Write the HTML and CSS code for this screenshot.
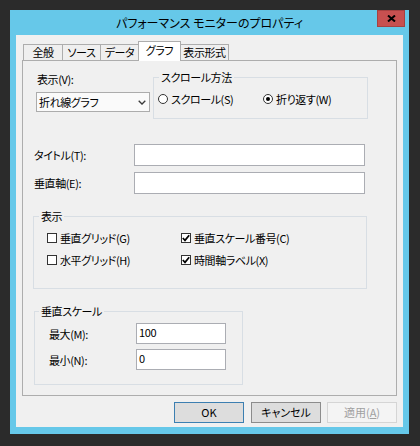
FILE: index.html
```html
<!DOCTYPE html>
<html lang="ja">
<head>
<meta charset="utf-8">
<title>パフォーマンス モニターのプロパティ</title>
<link rel="stylesheet" href="styles.css">
</head>
<body>
<div class="window">
  <div class="titlebar">
    <span class="spacer"></span>
    <div class="title">パフォーマンス モニターのプロパティ</div>
    <div class="close"><svg width="9" height="7" viewBox="0 0 9 7"><path d="M1 0.5 L8 6.5 M8 0.5 L1 6.5" stroke="#000" stroke-width="2" fill="none"/></svg></div>
  </div>
  <div class="client">
    <div class="tabs">
      <div class="tab t1">全般</div>
      <div class="tab t2">ソース</div>
      <div class="tab t3">データ</div>
      <div class="tab t4 active">グラフ</div>
      <div class="tab t5">表示形式</div>
    </div>
    <div class="panel">
      <div class="row-a">
        <div class="view-col">
          <div class="lbl">表示(V):</div>
          <div class="select"><span>折れ線グラフ</span><svg width="8" height="5" viewBox="0 0 8 5"><polyline points="0.7,0.8 4,4 7.3,0.8" stroke="#3a3a3a" stroke-width="1.3" fill="none"/></svg></div>
        </div>
        <fieldset class="grp grp-scroll">
          <legend>スクロール方法</legend>
          <div class="radios">
            <div class="opt"><span class="rb"></span><span>スクロール(S)</span></div>
            <div class="opt"><span class="rb on"></span><span>折り返す(W)</span></div>
          </div>
        </fieldset>
      </div>
      <div class="fields">
        <div class="lbl">タイトル(T):</div><div class="edit"></div>
        <div class="lbl">垂直軸(E):</div><div class="edit"></div>
      </div>
      <fieldset class="grp grp-disp">
        <legend>表示</legend>
        <div class="checks">
          <div class="opt"><span class="cb"></span><span>垂直グリッド(G)</span></div>
          <div class="opt"><span class="cb on"><svg width="8" height="8" viewBox="0 0 8 8"><path d="M0.8 4 L3 6.4 L7.2 1.2" stroke="#000" stroke-width="1.7" fill="none"/></svg></span><span>垂直スケール番号(C)</span></div>
          <div class="opt"><span class="cb"></span><span>水平グリッド(H)</span></div>
          <div class="opt"><span class="cb on"><svg width="8" height="8" viewBox="0 0 8 8"><path d="M0.8 4 L3 6.4 L7.2 1.2" stroke="#000" stroke-width="1.7" fill="none"/></svg></span><span>時間軸ラベル(X)</span></div>
        </div>
      </fieldset>
      <fieldset class="grp grp-scale">
        <legend>垂直スケール</legend>
        <div class="scale">
          <div class="lbl">最大(M):</div><div class="edit val">100</div>
          <div class="lbl">最小(N):</div><div class="edit val">0</div>
        </div>
      </fieldset>
    </div>
    <div class="buttons">
      <div class="btn default">OK</div>
      <div class="btn cancel">キャンセル</div>
      <div class="btn disabled">適用(<u>A</u>)</div>
    </div>
  </div>
</div>
</body>
</html>
```

FILE: styles.css
```css
html, body {
  margin: 0;
  padding: 0;
}

body {
  width: 420px;
  height: 446px;
  box-sizing: border-box;
  padding: 10px 0 0 10px;
  background: #2b2b2b;
  font-family: "Noto Sans CJK JP", "Noto Sans", sans-serif;
  font-size: 11px;
  font-weight: 400;
  line-height: 14px;
  letter-spacing: -0.4px;
  color: #000;
  font-feature-settings: "palt";
}

.window {
  width: 399px;
  height: 424px;
  background: #66c8e9;
  display: flex;
  flex-direction: column;
}

.titlebar {
  height: 25px;
  display: grid;
  grid-template-columns: 1fr auto 1fr;
  align-items: start;
}

.title {
  font-size: 12px;
  line-height: 26px;
  letter-spacing: 0;
  white-space: nowrap;
}

.close {
  justify-self: end;
  margin-right: 4px;
  width: 28px;
  height: 17px;
  box-sizing: border-box;
  background: #c75050;
  border: 1px solid #a64141;
  display: flex;
  align-items: center;
  justify-content: center;
}

.client {
  margin: 0 6px;
  height: 392px;
  box-sizing: border-box;
  padding: 6px 6px 0;
  background: #f0f0f0;
}

.tabs {
  display: flex;
  align-items: flex-end;
  height: 19px;
  padding-left: 1px;
  position: relative;
  z-index: 1;
}

.tab {
  height: 16px;
  box-sizing: border-box;
  border: 1px solid #adadad;
  border-bottom: none;
  background: #efefef;
  text-align: center;
  line-height: 14px;
  margin-left: -1px;
  white-space: nowrap;
}

.tab:first-child { margin-left: 0; }
.t1 { width: 40px; }
.t2 { width: 39px; }
.t3 { width: 39px; }
.t4 { width: 43px; }
.t5 { width: 49px; }

.tab.active {
  height: 20px;
  margin-bottom: -1px;
  padding-top: 1px;
  background: #fff;
}

.panel {
  height: 336px;
  box-sizing: border-box;
  border: 1px solid #adadad;
  padding-top: 9px;
  display: flex;
  flex-direction: column;
  align-items: flex-start;
}

.row-a {
  display: flex;
  align-items: flex-start;
}

.view-col {
  margin-left: 13px;
  width: 114px;
}

.view-col .lbl {
  margin-top: 1px;
  line-height: 16px;
  padding-left: 1px;
}

.select {
  margin-top: 5px;
  height: 20px;
  box-sizing: border-box;
  border: 1px solid #acacac;
  background: #fafafa;
  display: flex;
  align-items: center;
  justify-content: space-between;
  padding: 0 3px 0 2px;
}

.grp {
  margin: 0;
  padding: 0;
  min-width: 0;
  border: 1px solid #d8dee4;
}

.grp legend {
  padding: 0 2px;
  margin-left: 5px;
  line-height: 14px;
}

.grp-scroll {
  margin-left: 3px;
  width: 215px;
  box-sizing: border-box;
}

.radios {
  display: grid;
  grid-template-columns: 105px auto;
  padding-left: 4px;
  margin: 8px 0 12px;
}

.opt {
  display: flex;
  align-items: center;
  gap: 3px;
  white-space: nowrap;
}

.rb {
  width: 10px;
  height: 10px;
  box-sizing: border-box;
  border: 1px solid #333;
  border-radius: 50%;
  background: #fff;
  display: flex;
  align-items: center;
  justify-content: center;
}

.rb.on::after {
  content: "";
  width: 4px;
  height: 4px;
  border-radius: 50%;
  background: #000;
}

.fields {
  display: grid;
  grid-template-columns: 100px 231px;
  row-gap: 6px;
  align-items: center;
  margin: 25px 0 0 11px;
}

.edit {
  height: 22px;
  box-sizing: border-box;
  border: 1px solid #abadb3;
  background: #fff;
}

.grp-disp {
  margin: 15px 0 0 10px;
  width: 334px;
  box-sizing: border-box;
}

.checks {
  display: grid;
  grid-template-columns: 134px auto;
  row-gap: 8px;
  padding: 8px 0 21px 13px;
}

.cb {
  width: 10px;
  height: 10px;
  box-sizing: border-box;
  border: 1px solid #333;
  background: #fff;
  display: flex;
  align-items: center;
  justify-content: center;
}

.grp-scale {
  margin: 15px 0 0 11px;
  width: 209px;
  box-sizing: border-box;
}

.grp-scale legend {
  margin-left: 4px;
}

.scale {
  display: grid;
  grid-template-columns: 87px 90px;
  row-gap: 5px;
  align-items: center;
  padding: 5px 0 14px 14px;
}

.edit.val {
  height: 21px;
  padding: 1px 2px 0;
  line-height: 14px;
}

.buttons {
  display: flex;
  justify-content: flex-end;
  margin-top: 6px;
}

.btn {
  width: 70px;
  height: 21px;
  box-sizing: border-box;
  border: 1px solid #8c8c8c;
  background: #dddddd;
  text-align: center;
  line-height: 19px;
  letter-spacing: 0;
}

.btn + .btn { margin-left: 7px; }
.btn.disabled { margin-left: 6px; }

.btn.default {
  border-color: #3c7fb1;
}

.btn.disabled {
  background: #f4f4f4;
  border-color: #d5d5d5;
  color: #a0a0a0;
}
```
